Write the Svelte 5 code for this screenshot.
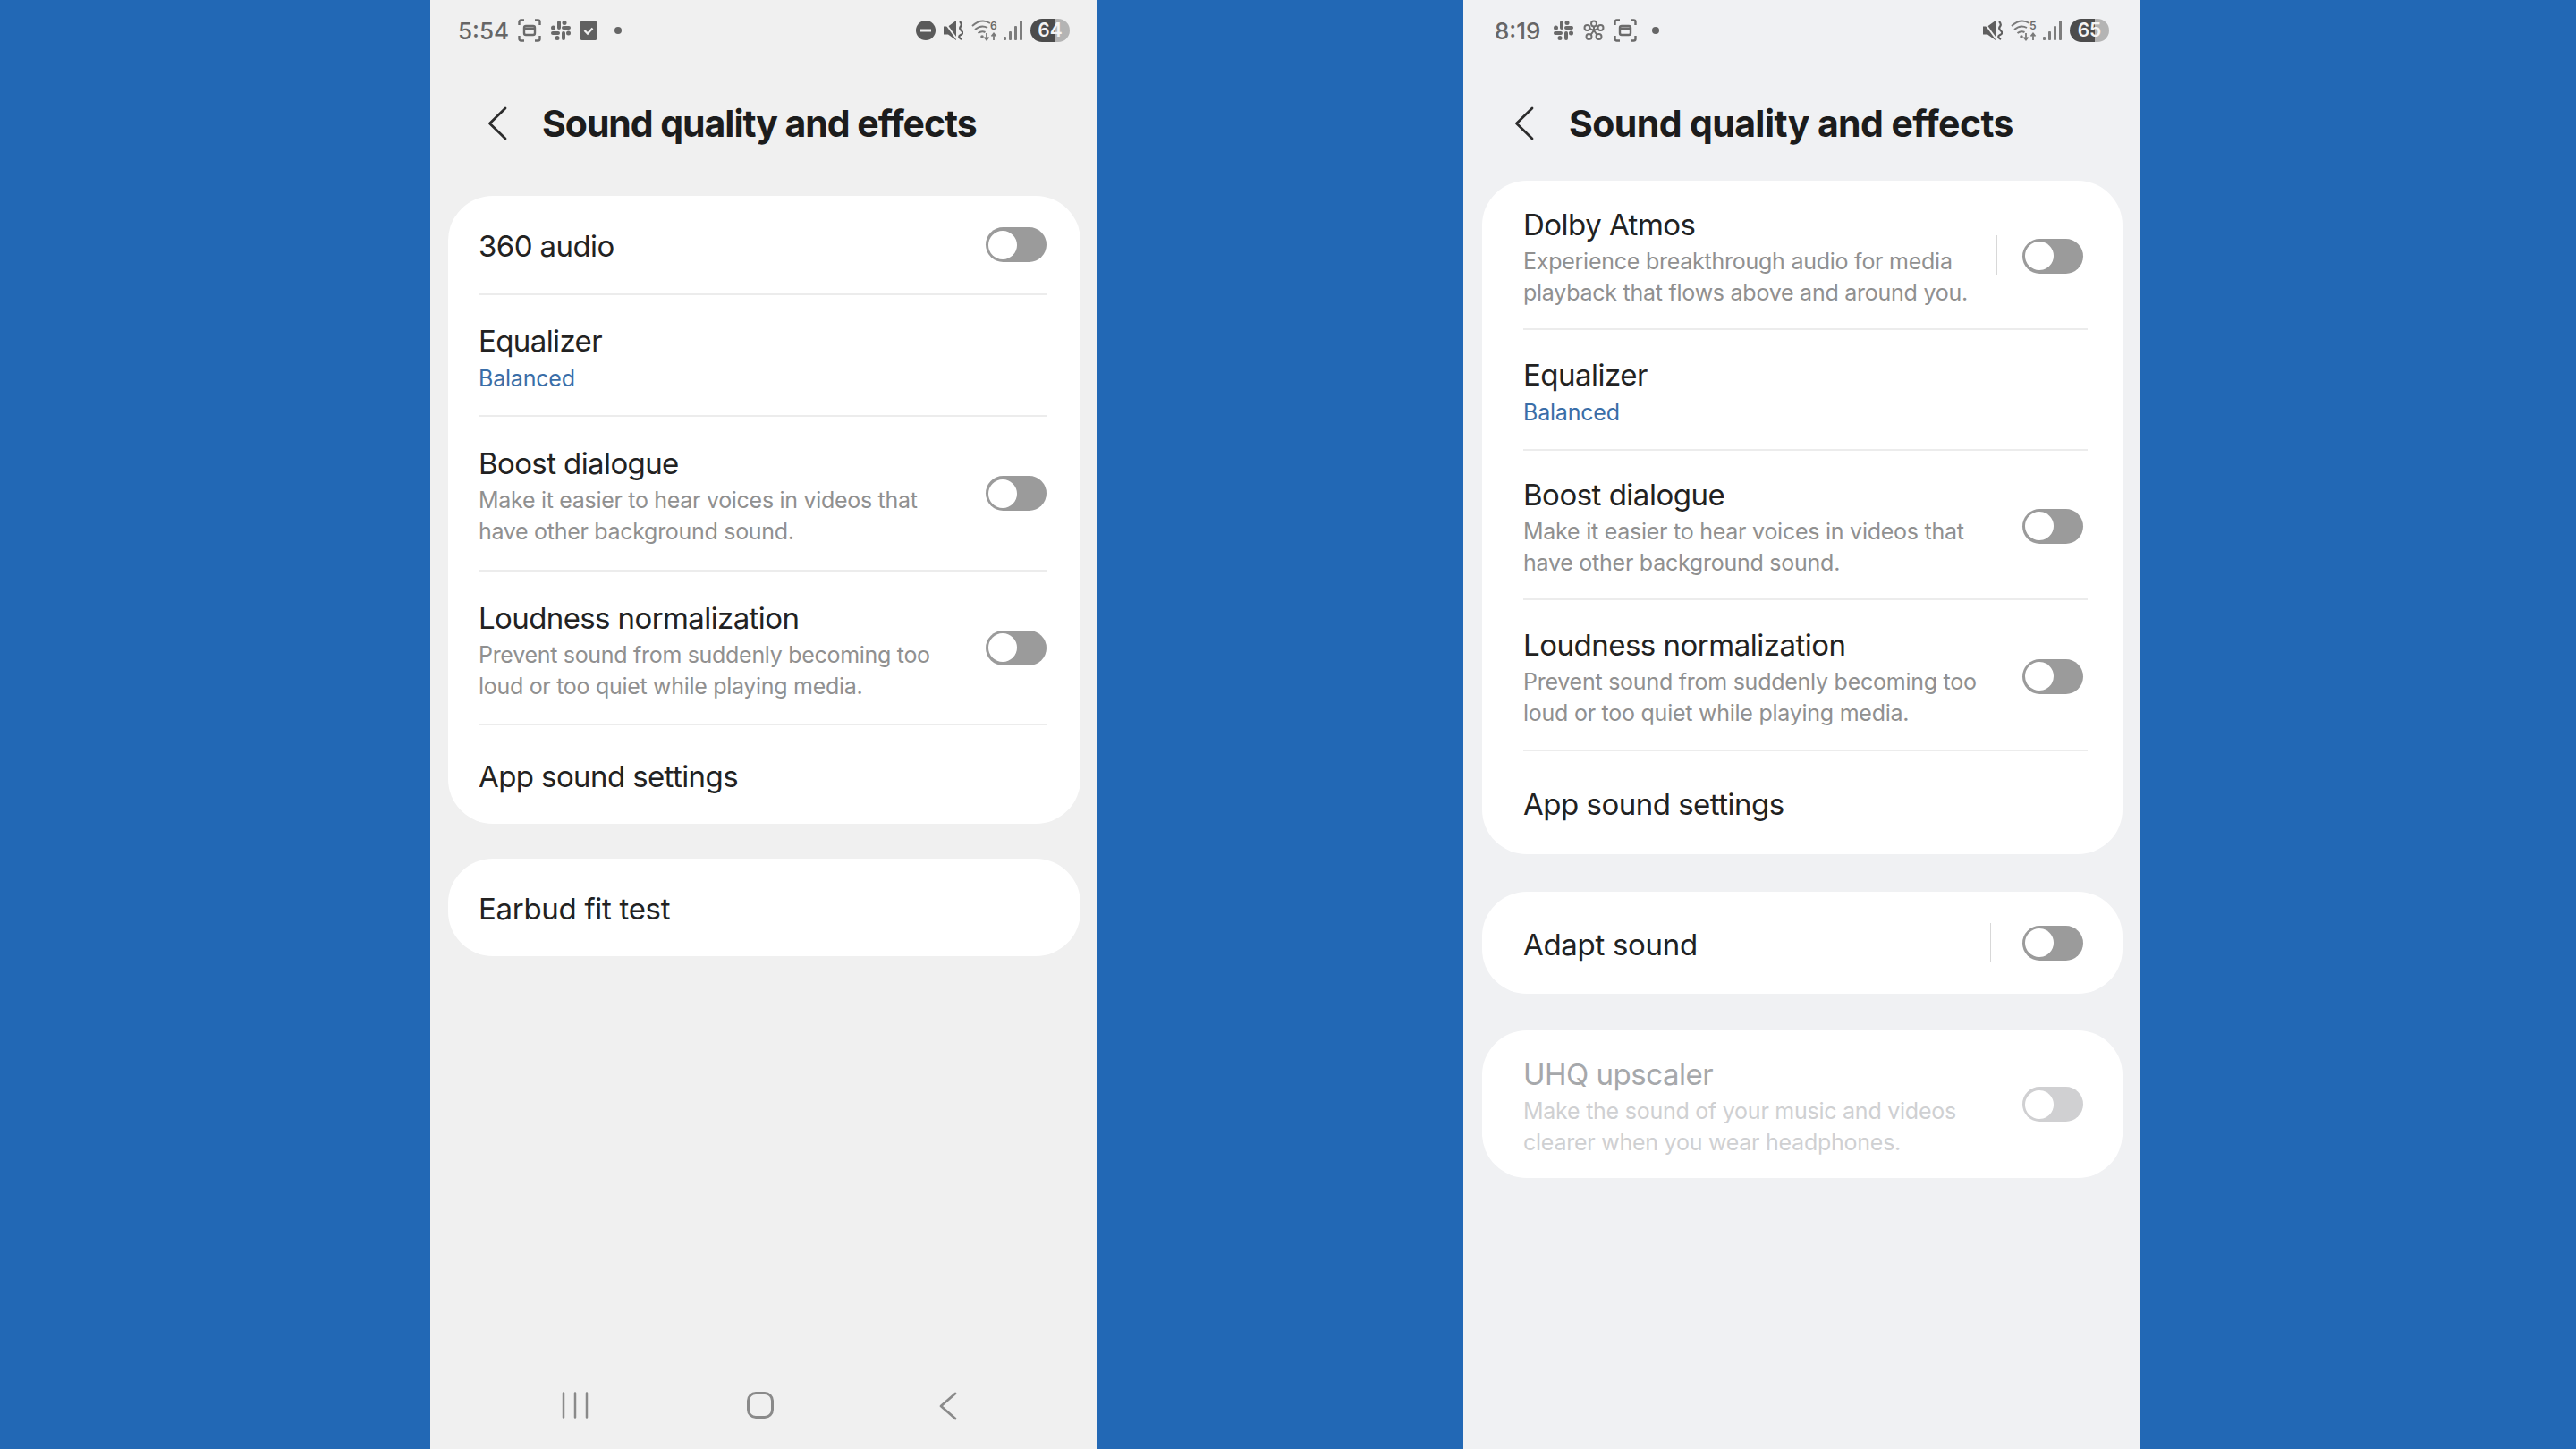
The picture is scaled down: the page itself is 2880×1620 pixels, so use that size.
<script>
  const leftRows = [
    { h: 111, title: '360 audio', toggle: true },
    { h: 136, title: 'Equalizer', value: 'Balanced' },
    { h: 173, title: 'Boost dialogue', desc: ['Make it easier to hear voices in videos that', 'have other background sound.'], toggle: true },
    { h: 172, title: 'Loudness normalization', desc: ['Prevent sound from suddenly becoming too', 'loud or too quiet while playing media.'], toggle: true },
    { h: 110, title: 'App sound settings' }
  ]
  const rightRows = [
    { h: 167, title: 'Dolby Atmos', desc: ['Experience breakthrough audio for media', 'playback that flows above and around you.'], toggle: true, sep: true },
    { h: 135, title: 'Equalizer', value: 'Balanced' },
    { h: 167, title: 'Boost dialogue', desc: ['Make it easier to hear voices in videos that', 'have other background sound.'], toggle: true },
    { h: 169, title: 'Loudness normalization', desc: ['Prevent sound from suddenly becoming too', 'loud or too quiet while playing media.'], toggle: true },
    { h: 115, title: 'App sound settings' }
  ]
</script>

{#snippet shot()}
  <svg width="26" height="26" viewBox="0 0 26 26" fill="none" stroke="#6a6a6a" stroke-width="2.4">
    <path d="M1.5 7V3.5a2 2 0 0 1 2-2H7M19 1.5h3.5a2 2 0 0 1 2 2V7M24.5 19v3.500a2 2 0 0 1-2 2H19M7 24.500H3.500a2 2 0 0 1-2-2V19" />
    <rect x="7" y="8" width="12" height="10" rx="2" />
    <path d="M8 11h10" stroke-width="3" />
  </svg>
{/snippet}

{#snippet slack()}
  <svg width="24" height="24" viewBox="0 0 24 24" fill="#6a6a6a">
    <rect x="8" y="1" width="4" height="10" rx="2" />
    <rect x="13" y="13" width="4" height="10" rx="2" />
    <rect x="1" y="13" width="10" height="4" rx="2" />
    <rect x="13" y="7" width="10" height="4" rx="2" />
    <circle cx="16" cy="3.500" r="2.500" />
    <circle cx="8" cy="20.500" r="2.500" />
    <circle cx="3.500" cy="9" r="2.500" />
    <circle cx="20.500" cy="15" r="2.500" />
  </svg>
{/snippet}

{#snippet check()}
  <svg width="18" height="22" viewBox="0 0 18 22">
    <rect width="18" height="22" rx="1.500" fill="#606060" />
    <path d="M4.500 11l3.500 3.500 5.500-6" fill="none" stroke="#f0f0f0" stroke-width="2.400" />
  </svg>
{/snippet}

{#snippet flower()}
  <svg width="24" height="24" viewBox="0 0 24 24" fill="none" stroke="#707070" stroke-width="2">
    <circle cx="12" cy="4.500" r="3" />
    <circle cx="4.500" cy="9" r="3" />
    <circle cx="19.500" cy="9" r="3" />
    <circle cx="6.500" cy="19" r="3" />
    <circle cx="17.500" cy="19" r="3" />
    <path d="M12 8v4M7.500 10l4.500 2M16.500 10l-4.500 2M8.500 17l3.500-5M15.500 17l-3.500-5" />
  </svg>
{/snippet}

{#snippet mute()}
  <svg width="22" height="24" viewBox="0 0 22 24" fill="#5f5f5f">
    <path d="M0 7.500h5L14 1v22l-9-6.500H0z" />
    <path d="M0 1l15 21" stroke="#f0f0f0" stroke-width="2" />
    <path d="M18 2q3 3 1 5.500t1 5-1 4.500 1 5" fill="none" stroke="#5f5f5f" stroke-width="2.200" />
  </svg>
{/snippet}

{#snippet wifi(n)}
  <svg width="32" height="26" viewBox="0 0 32 26" fill="none" stroke="#7a7a7a" stroke-width="2">
    <path d="M1 8q10-9 20-3M4 12q7-6 14-2M7.500 16q4-3 8-1" />
    <circle cx="12" cy="20" r="1.800" fill="#7a7a7a" stroke="none" />
    <path d="M17 16v7M14.500 20.500l2.500 3 2.500-3M25 24v-7M22.500 19.500l2.500-3 2.500 3" stroke-width="1.800" />
    <text x="21" y="12" font-size="12" font-family="Inter, sans-serif" font-weight="600" fill="#6a6a6a" stroke="none">{n}</text>
  </svg>
{/snippet}

{#snippet signal()}
  <svg class="signal" width="21" height="24" viewBox="0 0 21 24" fill="#7d7d7d">
    <rect x="0" y="19" width="3" height="4" rx="1" />
    <rect x="6" y="13" width="3" height="10" rx="1" />
    <rect x="12" y="7" width="3" height="16" rx="1" />
    <rect x="18" y="1" width="3" height="22" rx="1" />
  </svg>
{/snippet}

{#snippet battery(n)}
  <span class="battery">{n}</span>
{/snippet}

{#snippet switcher(off)}
  <span class="toggle" class:off><span class="knob"></span></span>
{/snippet}

{#snippet back()}
  <svg class="back" width="22" height="38" viewBox="0 0 22 38" fill="none" stroke="#2c2c2c" stroke-width="2.800" stroke-linecap="round" stroke-linejoin="round">
    <path d="M20 2L2.500 19 20 36" />
  </svg>
{/snippet}

{#snippet row(item)}
  <div class="row" style="height: {item.h}px">
    <div class="copy">
      <div class="title">{item.title}</div>
      {#if item.value}<div class="value">{item.value}</div>{/if}
      {#if item.desc}
        {#each item.desc as line}<div class="desc">{line}</div>{/each}
      {/if}
    </div>
    {#if item.sep}<span class="sep"></span>{/if}
    {#if item.toggle}{@render switcher(false)}{/if}
  </div>
{/snippet}

<div class="stage">
  <section class="phone left">
    <div class="status">
      <span class="time">5:54</span>
      <span class="icons">{@render shot()}{@render slack()}{@render check()}<i class="dot"></i></span>
      <span class="icons end">
        <svg width="22" height="22" viewBox="0 0 22 22"><circle cx="11" cy="11" r="11" fill="#5a5a5a" /><rect x="5" y="9.500" width="12" height="3" fill="#f0f0f0" /></svg>
        {@render mute()}{@render wifi(6)}{@render signal()}{@render battery(64)}
      </span>
    </div>
    <header class="head">{@render back()}<h1>Sound quality and effects</h1></header>
    <div class="card first">
      {#each leftRows as item}{@render row(item)}{/each}
    </div>
    <div class="card single">
      <div class="row earbud"><div class="copy"><div class="title">Earbud fit test</div></div></div>
    </div>
    <nav class="nav">
      <svg width="30" height="30" viewBox="0 0 30 30" stroke="#8a8a8a" stroke-width="2.500" stroke-linecap="round"><path d="M2 1.500v27M15 1.500v27M28 1.500v27" /></svg>
      <span class="home"></span>
      <svg width="20" height="32" viewBox="0 0 20 32" fill="none" stroke="#8a8a8a" stroke-width="2.800" stroke-linecap="round" stroke-linejoin="round"><path d="M18 2L2 16l16 14" /></svg>
    </nav>
  </section>

  <section class="phone right">
    <div class="status">
      <span class="time">8:19</span>
      <span class="icons">{@render slack()}{@render flower()}{@render shot()}<i class="dot"></i></span>
      <span class="icons end">{@render mute()}{@render wifi(5)}{@render signal()}{@render battery(65)}</span>
    </div>
    <header class="head">{@render back()}<h1>Sound quality and effects</h1></header>
    <div class="card first">
      {#each rightRows as item}{@render row(item)}{/each}
    </div>
    <div class="card adapt">
      <div class="row"><div class="copy"><div class="title">Adapt sound</div></div><span class="sep"></span>{@render switcher(false)}</div>
    </div>
    <div class="card uhq">
      <div class="row">
        <div class="copy">
          <div class="title">UHQ upscaler</div>
          <div class="desc">Make the sound of your music and videos</div>
          <div class="desc">clearer when you wear headphones.</div>
        </div>
        {@render switcher(true)}
      </div>
    </div>
  </section>
</div>

<style>
  :global(body) {
    margin: 0;
    background: #2268b5;
  }
  .stage {
    width: 2880px;
    height: 1620px;
    display: flex;
    padding-left: 481px;
    box-sizing: border-box;
    font-family: Inter, "Liberation Sans", sans-serif;
    overflow: hidden;
  }
  .phone {
    height: 1620px;
    box-sizing: border-box;
    display: flex;
    flex-direction: column;
  }
  .left {
    width: 746px;
    background: #f0f0f0;
    padding: 0 19px 0 20px;
  }
  .right {
    width: 757px;
    margin-left: 409px;
    background: #f0f1f3;
    padding: 0 20px 0 21px;
  }
  .status {
    height: 68px;
    display: flex;
    align-items: center;
    flex-shrink: 0;
  }
  .left .status { padding: 0 12px 0 11px; }
  .right .status { padding: 0 15px 0 14px; }
  .time {
    font-size: 26px;
    font-weight: 500;
    color: #666;
    letter-spacing: 0;
  }
  .icons {
    display: flex;
    align-items: center;
    gap: 10px;
    margin-left: 14px;
  }
  .left .icons { margin-left: 10px; }
  .icons.end {
    margin-left: auto;
    gap: 9px;
  }
  .signal { margin-left: -5px; }
  .dot {
    width: 8px;
    height: 8px;
    border-radius: 50%;
    background: #666;
    margin-left: 10px;
  }
  .right .dot { margin-left: 7px; }
  .battery {
    width: 44px;
    height: 26px;
    border-radius: 13px;
    background: linear-gradient(90deg, #4c4c4c 64%, #b4b4b4 64%);
    color: #f4f4f4;
    font-size: 21px;
    font-weight: 600;
    line-height: 26px;
    text-align: center;
  }
  .head {
    height: 140px;
    display: flex;
    align-items: center;
    flex-shrink: 0;
  }
  .left .head { margin-bottom: 11px; }
  .right .head { margin-bottom: -6px; }
  .back { flex-shrink: 0; }
  .left .back { margin-left: 44px; }
  .right .back { margin-left: 36px; }
  h1 {
    margin: 0 0 0 39px;
    font-size: 41px;
    font-weight: 700;
    color: #1c1c1c;
    letter-spacing: -0.6px;
  }
  .left h1 { letter-spacing: -1.05px; }
  .card {
    background: #fff;
    border-radius: 50px;
    padding: 0 38px 0 34px;
    flex-shrink: 0;
  }
  .right .card { padding: 0 39px 0 46px; }
  .single {
    margin-top: 39px;
    height: 109px;
  }
  .adapt {
    margin-top: 42px;
    height: 114px;
  }
  .uhq {
    margin-top: 41px;
    height: 165px;
  }
  .row {
    display: flex;
    align-items: center;
    box-sizing: border-box;
    border-bottom: 2px solid #ececec;
  }
  .first .row:last-child { border-bottom: 0; }
  .adapt .row,
  .uhq .row,
  .single .row {
    border-bottom: 0;
    height: 100%;
  }
  .copy {
    flex: 1;
    min-width: 0;
    padding-top: 5px;
  }
  .title {
    font-size: 33px;
    line-height: 44px;
    margin-bottom: 2px;
    color: #222;
    letter-spacing: -0.6px;
  }
  .right .title { letter-spacing: -0.5px; }
  .earbud .title, .adapt .title { letter-spacing: -0.3px; }
  .value {
    font-size: 25px;
    line-height: 36px;
    color: #3a6ea8;
    letter-spacing: -0.2px;
  }
  .desc {
    font-size: 25px;
    line-height: 35px;
    color: #909090;
    letter-spacing: -0.3px;
  }
  .right .desc { letter-spacing: -0.25px; }
  .uhq .title { color: #a6a8ab; }
  .uhq .desc { color: #cfd0d2; }
  .sep {
    width: 1px;
    height: 44px;
    background: #d8d8d8;
    margin-right: 28px;
  }
  .adapt .sep { margin-right: 35px; }
  .toggle {
    width: 68px;
    height: 39px;
    border-radius: 20px;
    background: #9b9b9b;
    display: flex;
    align-items: center;
    padding-left: 3px;
    box-sizing: border-box;
    flex-shrink: 0;
  }
  .right .toggle { margin-right: 5px; }
  .right .first .toggle { margin-top: 3px; }
  .toggle.off { background: #d0d0d2; }
  .knob {
    width: 32px;
    height: 32px;
    border-radius: 50%;
    background: #fff;
  }
  .nav {
    margin-top: auto;
    height: 64px;
    display: flex;
    align-items: flex-start;
    padding-left: 127px;
    box-sizing: border-box;
  }
  .home {
    width: 30px;
    height: 30px;
    border: 3px solid #8a8a8a;
    box-sizing: border-box;
    border-radius: 10px;
    margin-left: 177px;
  }
  .nav svg:last-child { margin-left: 185px; }
</style>
